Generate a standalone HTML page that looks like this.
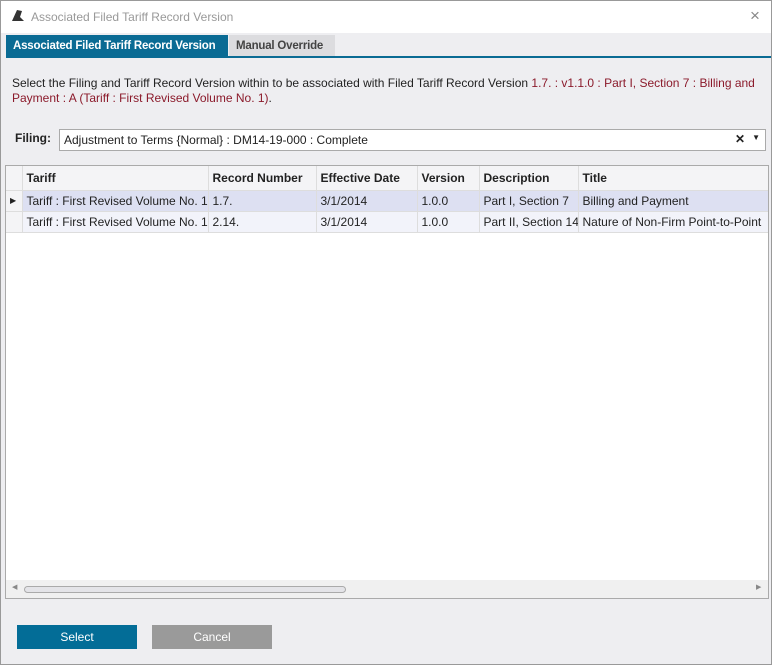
<!DOCTYPE html><html><head><style>
*{box-sizing:border-box;margin:0;padding:0}
body{width:772px;height:665px;background:#eeeef1;font-family:"Liberation Sans",sans-serif;font-size:12px;color:#222;position:relative;overflow:hidden;border:1px solid #999}
.abs{position:absolute}
.title{left:0;top:0;width:770px;height:32px;background:#fff}
.red{color:#8b1a2b}
table{border-collapse:collapse;position:absolute;left:0;top:0;table-layout:fixed;width:800px}
td,th{height:21px;border-right:1px solid #ddd;border-bottom:1px solid #ddd;padding-left:4px;text-align:left;white-space:nowrap;overflow:hidden;font-size:12px}
th{height:24px;background:#f4f4f6;font-weight:bold}
.tab{white-space:nowrap;font-weight:bold;font-size:11.5px;letter-spacing:-0.2px}
</style></head><body>
<div class="abs title"></div>
<svg class="abs" style="left:10px;top:8px" width="14" height="13"><path d="M1 12 L6 1 L11 2 L9 8 L13 12 Z" fill="#333"/></svg>
<div class="abs" style="left:30px;top:9px;color:#999;font-size:12px">Associated Filed Tariff Record Version</div>
<div class="abs" style="left:749px;top:5px;color:#888;font-size:17px">×</div>
<div class="abs tab" style="left:5px;top:34px;width:222px;height:22px;background:#0a6b94;color:#fff;padding:5px 0 0 7px">Associated Filed Tariff Record Version</div>
<div class="abs tab" style="left:228px;top:34px;width:106px;height:22px;background:#dcdcdf;color:#444;padding:5px 0 0 7px">Manual Override</div>
<div class="abs" style="left:5px;top:55px;width:765px;height:2px;background:#0a6b94"></div>
<div class="abs" style="left:11px;top:75px;width:750px;line-height:15px">Select the Filing and Tariff Record Version within to be associated with Filed Tariff Record Version <span class="red">1.7. : v1.1.0 : Part I, Section 7 : Billing and Payment : A (Tariff : First Revised Volume No. 1)</span>.</div>
<div class="abs" style="left:14px;top:130px;font-weight:bold">Filing:</div>
<div class="abs" style="left:58px;top:128px;width:707px;height:22px;background:#fff;border:1px solid #aaa;padding:3px 0 0 4px">Adjustment to Terms {Normal} : DM14-19-000 : Complete
<span class="abs" style="right:20px;top:2px;font-weight:bold">✕</span><span class="abs" style="right:5px;top:3px;font-size:8px">▼</span></div>
<div class="abs" style="left:4px;top:164px;width:764px;height:434px;background:#fff;border:1px solid #aaa;overflow:hidden">
<table>
<colgroup><col style="width:16px"><col style="width:186px"><col style="width:108px"><col style="width:101px"><col style="width:62px"><col style="width:99px"><col style="width:228px"></colgroup>
<tr><th></th><th>Tariff</th><th>Record Number</th><th>Effective Date</th><th>Version</th><th>Description</th><th>Title</th></tr>
<tr style="background:#dde0f2"><td style="background:#f4f4f6;font-size:8px">▶</td><td>Tariff : First Revised Volume No. 1</td><td>1.7.</td><td>3/1/2014</td><td>1.0.0</td><td>Part I, Section 7</td><td>Billing and Payment</td></tr>
<tr style="background:#f2f3fa"><td style="background:#f4f4f6"></td><td>Tariff : First Revised Volume No. 1</td><td>2.14.</td><td>3/1/2014</td><td>1.0.0</td><td>Part II, Section 14</td><td>Nature of Non-Firm Point-to-Point</td></tr>
</table>
<div class="abs" style="left:0;top:414px;width:762px;height:18px;background:#f0f0f0"></div>
<div class="abs" style="left:18px;top:420px;width:322px;height:7px;border:1px solid #aaa;border-radius:4px;background:#e4e4e8"></div>
<div class="abs" style="left:6px;top:417px;font-size:7px;color:#888">◀</div>
<div class="abs" style="left:750px;top:417px;font-size:7px;color:#888">▶</div>
</div>
<div class="abs" style="left:16px;top:624px;width:120px;height:24px;background:#036d97;color:#fff;text-align:center;line-height:24px">Select</div>
<div class="abs" style="left:151px;top:624px;width:120px;height:24px;background:#9a9a9a;color:#fff;text-align:center;line-height:24px">Cancel</div>
</body></html>
